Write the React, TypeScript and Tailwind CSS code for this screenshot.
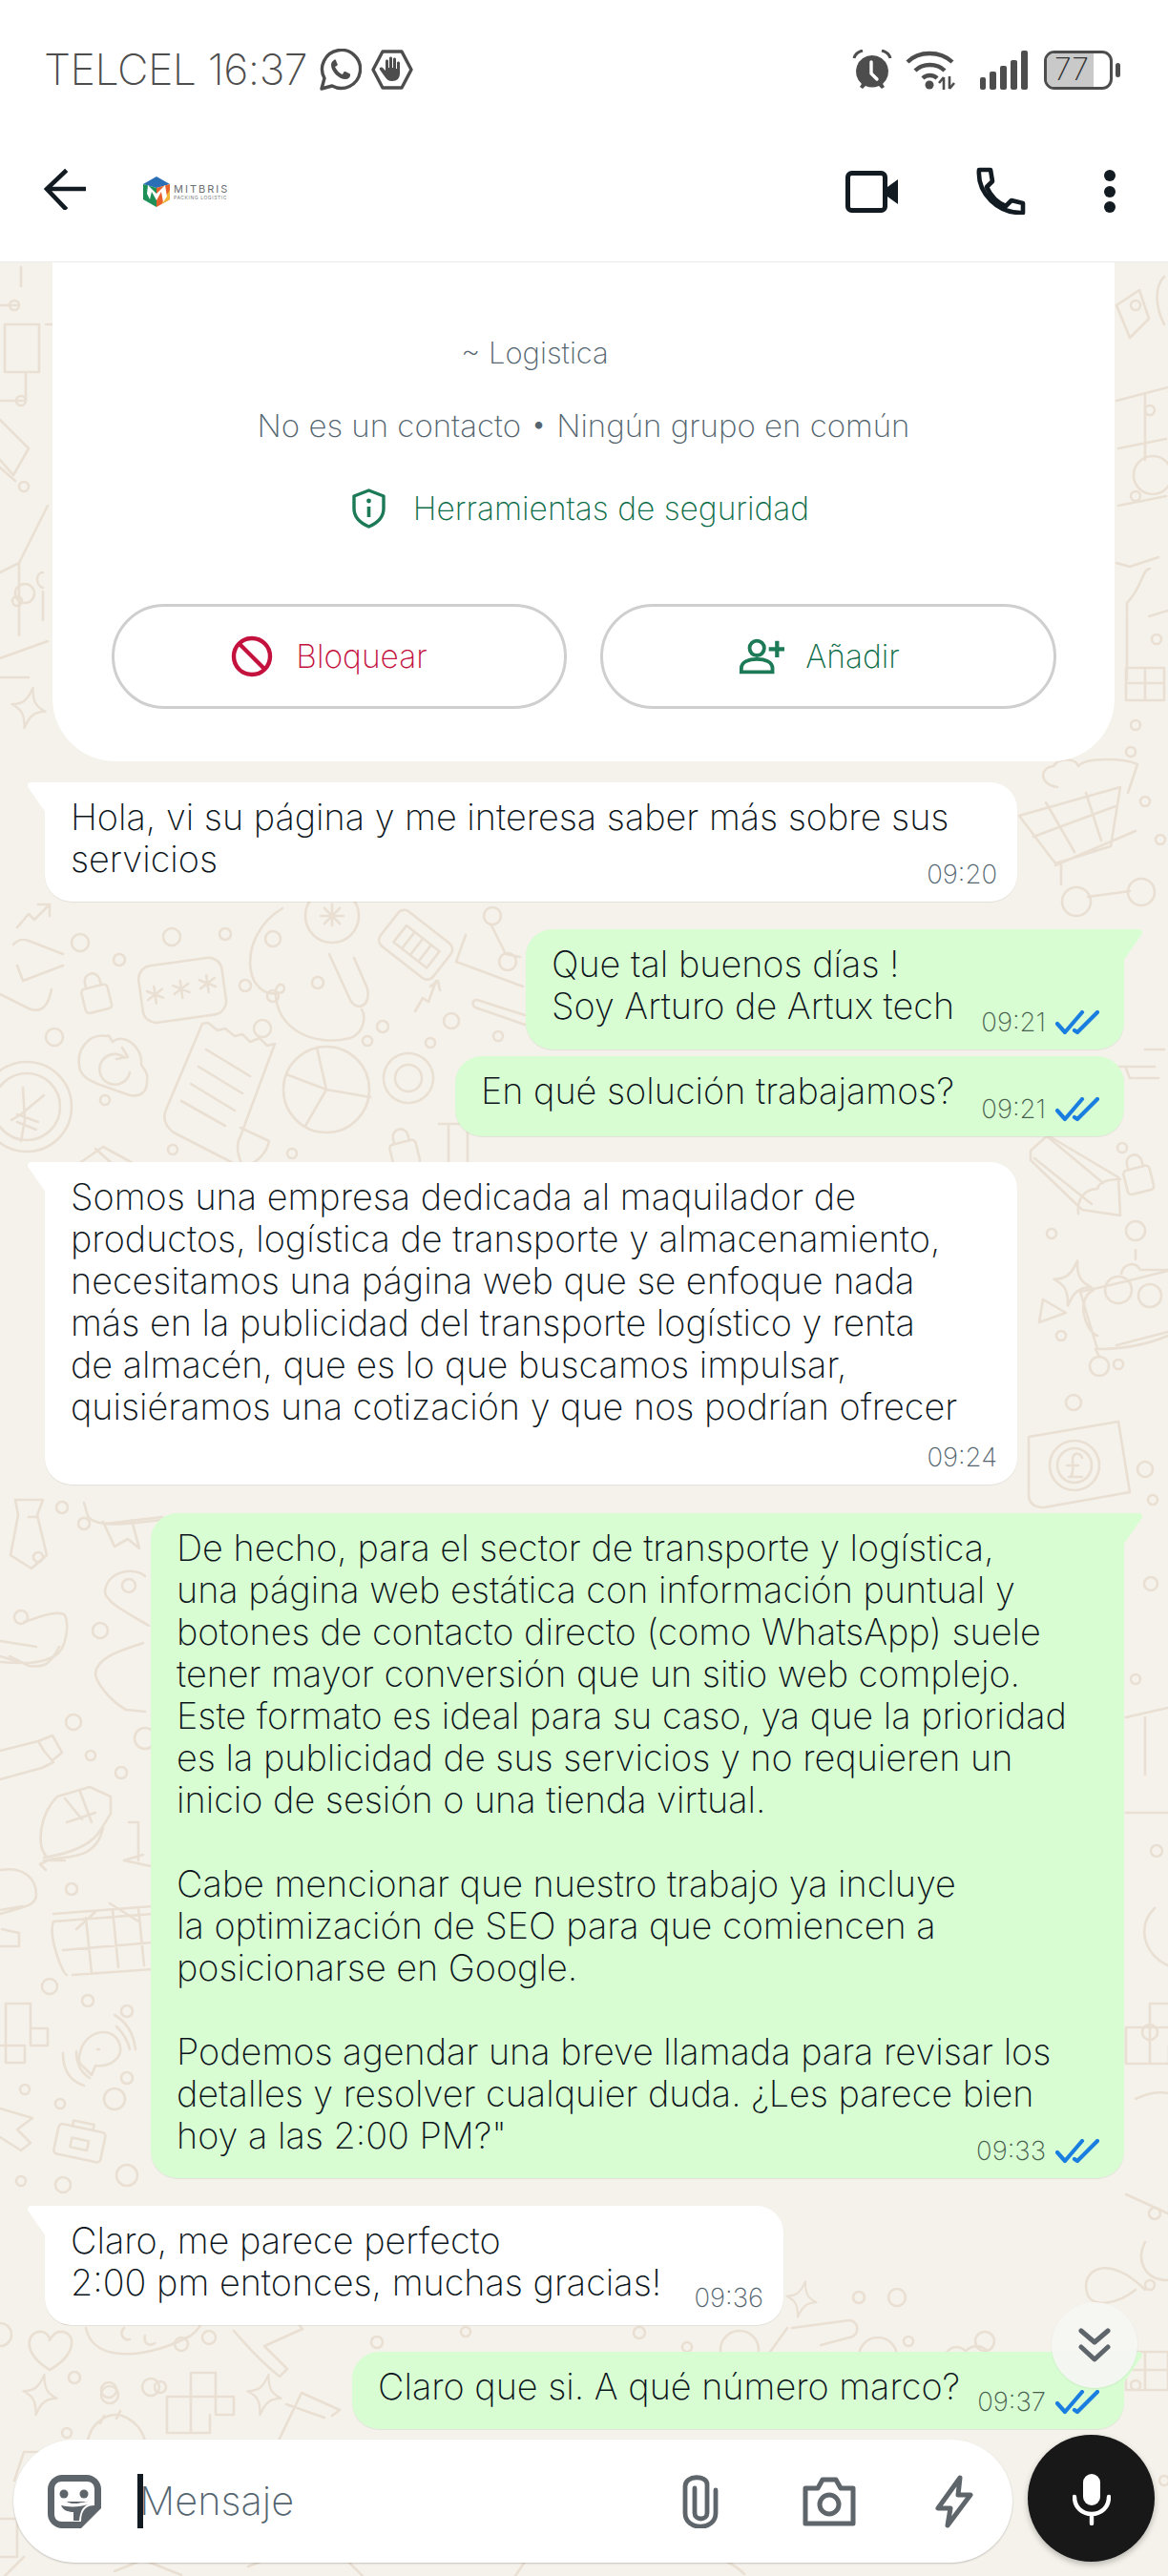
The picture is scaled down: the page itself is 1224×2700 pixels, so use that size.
import React from "react";

const sans = "font-['Inter','Noto_Sans',sans-serif]";

function Dots({ items }: { items: number[][] }) {
  return (
    <>
      {items.map(([x, y, r], i) => (
        <circle key={i} cx={x} cy={y} r={r} />
      ))}
    </>
  );
}

function Lock({ x, y }: { x: number; y: number }) {
  return (
    <g transform={`translate(${x} ${y}) rotate(-14)`}>
      <rect x="-14" y="-8" width="28" height="26" rx="4" />
      <path d="M-8-8v-6a8 8 0 0 1 16 0v6" />
    </g>
  );
}

function Star({ x, y, s = 1 }: { x: number; y: number; s?: number }) {
  return (
    <path transform={`translate(${x} ${y}) scale(${s}) rotate(12)`} d="M0-24C3-8 8-3 20 0 8 3 3 8 0 24-3 8-8 3-20 0-8-3-3-8 0-24Z" />
  );
}

function Heart({ x, y }: { x: number; y: number }) {
  return <path transform={`translate(${x} ${y})`} d="M0 22C-32 2-22-20-8-18-3-17 0-13 0-9 3-15 8-19 14-18 28-15 28 6 0 22Z" />;
}

function Blocks({ x, y }: { x: number; y: number }) {
  return (
    <g transform={`translate(${x} ${y})`}>
      <path d="M5 0h26v25H5zM31 25h19v19H31zM5 25H-20v38H5v-38zM5 63h20v-19" />
    </g>
  );
}

function Cart({ x, y }: { x: number; y: number }) {
  return (
    <g transform={`translate(${x} ${y})`}>
      <path d="M0 60 106 30l-10 62-58 18L0 60ZM15 82l86-32M28 46l30 52M70 36l16 50M38 112l84-36M44 112v20" />
      <circle cx="60" cy="150" r="15" />
      <circle cx="128" cy="140" r="14" />
      <path d="M72 145l44-6" />
      <path d="M40 30c-18-2-20-20-4-22 6-10 24-8 26 0 8-10 50-8 62-2l-10 30" />
    </g>
  );
}

function Wallpaper() {
  return (
    <svg
      className="absolute inset-0 w-full h-full"
      viewBox="0 275 1224 2425"
      fill="none"
      stroke="#e9dfd2"
      strokeWidth="2.6"
      strokeLinecap="round"
      strokeLinejoin="round"
    >
      <Dots
        items={[
          [84, 988, 9], [180, 982, 9], [236, 979, 6], [125, 1006, 6], [57, 1087, 9], [286, 1044, 6], [275, 1078, 9],
          [257, 1033, 6], [286, 984, 8], [333, 1030, 6], [401, 1076, 6], [473, 1070, 8], [385, 1091, 5], [451, 1093, 5], [522, 1086, 5],
          [110, 1153, 5], [181, 1205, 5], [306, 1209, 5], [65, 1580, 6], [88, 1597, 6], [40, 1632, 5], [105, 1709, 8], [95, 1840, 5],
          [77, 1805, 8], [127, 1858, 6], [75, 1980, 6], [52, 2082, 8], [92, 2097, 6], [133, 2108, 6], [133, 2178, 6], [26, 2190, 5],
          [63, 2205, 5], [120, 2200, 11], [22, 2286, 5], [66, 2290, 8], [133, 2280, 11],
          [1185, 788, 5], [1200, 840, 5], [1216, 880, 5], [1176, 1203, 5], [1190, 1290, 10], [1102, 1293, 5], [1112, 1400, 5],
          [1172, 1430, 5], [1125, 1470, 8], [1200, 1540, 8], [1208, 1572, 5],
          [15, 320, 5], [22, 420, 5], [25, 510, 5], [18, 630, 5], [1190, 320, 5], [1205, 430, 5], [1190, 520, 5], [1212, 670, 5], [1190, 760, 5],
          [70, 2430, 6], [190, 2457, 7], [219, 2450, 7], [78, 2492, 6], [114, 2505, 8], [168, 2502, 6], [70, 2550, 5],
          [395, 2455, 6], [488, 2444, 5], [670, 2445, 6], [720, 2460, 5], [900, 2408, 6], [940, 2408, 9], [1032, 2454, 10], [952, 2454, 5],
          [1190, 2500, 5], [1210, 2320, 6], [1205, 2130, 8], [1212, 1940, 6], [1190, 1760, 5], [1206, 1660, 7],
          [1220, 2600, 5], [1205, 2395, 5],
        ]}
      />
      <path d="M18 972l12-14 6 6 16-16M40 948h12v12" />
      <path d="M14 990c5-6 10-6 16-4l36 14M66 1012 24 1028 18 1012M0 1042l30 15c12 5 20 0 24-20" />
      <Lock x={100} y={1042} />
      <g transform="rotate(-8 190 1037)">
        <rect x="147" y="1008" width="88" height="60" rx="14" />
        <path d="M162 1030v18M154 1034l16 9M170 1034l-16 9M190 1028v18M182 1032l16 9M198 1032l-16 9M218 1026v18M210 1030l16 9M226 1030l-16 9" />
      </g>
      <path d="M296 952c-50 30-40 100 0 88 6-6-4-14-7-2-2 40 40 60 78 50 16-6 16-24 12-30" />
      <circle cx="348" cy="960" r="28" />
      <path d="M345 1000l22 48c6 12 22 8 18-12l-14-32M348 948v22M336 960h24M340 952l16 16M356 952l-16 16" />
      <g transform="rotate(38 432 990)">
        <rect x="400" y="965" width="70" height="46" rx="8" />
        <path d="M415 978h44v22h-44zM426 978v22M437 978v22M448 978v22" />
      </g>
      <path d="M435 1060l8-14 6 4 8-22M451 1034l8-6 2 10" />
      <path d="M488 980 478 1008l70 26M515 970 530 1000M545 1003l-15-3M500 1048l50 16M500 1048c-6 0-5 6-2 8l52 18" />
      <circle cx="516" cy="960" r="9" />
      <circle cx="532" cy="1008" r="9" />
      <path d="M112 1086c-18-4-34 14-28 36 4 8 10 10 18 14l34 12c12 2 18-4 18-14 2-10-4-14-6-18 2-20-20-34-30-24-4-6-4-8-6-6Z" />
      <path d="M130 1108a16 16 0 1 0 6 16M128 1098l6 10-12 2" />
      <circle cx="28" cy="1160" r="47" />
      <circle cx="28" cy="1160" r="35" />
      <path d="M24 1140l2 34 -4 22M46 1148l-24 20-10 6M18 1168l22 8M18 1176l20 8" />
      <path d="M212 1073l-38 90c-4 10 0 18 8 24l74 38c-6-10-10-24-4-34l36-97-8 2-8-8-10 4-8-8-8 2-10-8-8 2-10-8ZM216 1100l46 28M208 1118l46 28M200 1136l46 28M190 1154l46 26M252 1182l30 14c-2 10-8 20-26 28" />
      <circle cx="342" cy="1142" r="45" />
      <path d="M332 1098l10 44 46 8M342 1142l-42-16M342 1142l-22 38" />
      <circle cx="428" cy="1130" r="14" />
      <circle cx="428" cy="1130" r="26" strokeDasharray="6 2" />
      <Lock x={423} y={1205} />
      <path d="M82 1220l26-18 22 12 28 16M100 1204l18 16M460 1178h30v42M470 1178v42" />

      <path d="M16 1572h29l-6 16 10 42-16 14-22-14 8-42-3-16ZM30 1590h8" />
      <path d="M88 1575l4 14c6 10 30 10 60 6l18-2M108 1595l12 26 14-8 12 10-8-30M110 1597l60-7" />
      <path d="M152 1652c-10-10-40-6-42 16 0 12 30 26 46 36" />
      <circle cx="135" cy="1662" r="7" />
      <path d="M25 1700c14-4 30-12 42-8 6 6 4 36-10 44-16 8-30 8-56 6M10 1736l20 10c15 2 22 0 32-20M0 1720l38 6M0 1736l20 6" />
      <circle cx="22" cy="1695" r="7" />
      <path d="M0 1835l40-10 6 10 10 12-12 6-44 12M40 1825l15-6 10 18-10 8" />
      <path d="M150 1722c-22 8-48 14-50 32 0 8 14 28 32 38l20 2" />
      <circle cx="152" cy="1822" r="11" />
      <path d="M60 1883c-18 18-22 50-12 62M60 1883l34-10 22 10 0 18-10 16c-10 18-34 26-60 30M46 1950l22 0M68 1885l18 22M84 1878l12 32M70 1910l30-10M48 1950c20-6 52 2 60-34M48 1960l-6-6 8-4" />
      <path d="M130 1950l20-6M145 1950v-40h-10M130 1950l28 6" />
      <path d="M0 1960c24-4 38 8 38 26 0 10-8 12-38 20M0 2002l24-4M0 2040h20v-14l-18-4" />
      <path d="M56 2006l104-8M66 2044l94-8M70 2070c-4 0-20-40-14-56l104-8M76 2070l84-6M90 2010l6 58M118 2002l6 60M145 2000l6 60M80 2022l20-18M115 1995l32 20" />
      <path d="M6 2100h26v26h18v18H32v-18M6 2100v62h20v-18H6M0 2144h6" />
      <path d="M86 2145c10-20 36-20 40 0 2 10-8 22-26 20l-4 10-10-10c-6-4-2-14 0-20ZM66 2152c0 20 10 30 22 34M80 2150c0 12 4 22 14 28M120 2112c14 8 20 20 22 36M122 2124c6 6 12 14 14 24M102 2148h2" />
      <path d="M0 2210l34 10-16 12 14 14-10 8-22-14" />
      <g transform="rotate(12 82 2248)">
        <rect x="58" y="2230" width="50" height="32" rx="4" />
        <path d="M72 2230v-6h22v6M74 2242h18v10H74z" />
      </g>

      <Cart x={1068} y={795} />
      <path d="M1080 1206l18-16 74 44 2 40-40-6-54-52ZM1096 1190l60 50M1084 1214l60 48M1130 1272c-2-16 8-26 20-26 2-8 14-10 24-10" />
      <path d="M1170 1118h40M1180 1120l4 10h30M1200 1100h20" />
      <Lock x={1192} y={1232} />
      <Star x={1124} y={1345} s={1} />
      <path d="M1093 1362l24 14-28 10 4-24Z" />
      <path d="M1132 1354c30-6 60-14 92-22M1132 1354l18 60M1224 1400c-24 10-50 14-74 14M1146 1352c-20 10-8 44 4 48M1175 1335c2-10 14-14 20-4l30 0" />
      <circle cx="1172" cy="1352" r="14" />
      <circle cx="1205" cy="1358" r="12" />
      <circle cx="1152" cy="1432" r="10" />
      <path d="M1152 1422l-4-8M1190 1320v-10M1170 1410l54-14" />
      <path d="M1078 1506l94-16 12 74-90 16c-10 0-16-4-16-14v-60Z" />
      <circle cx="1126" cy="1536" r="26" />
      <circle cx="1126" cy="1536" r="18" />
      <path d="M1120 1548h14M1118 1536h12M1122 1548c4-6 2-14 2-18 0-8 8-8 10-2" />

      <path d="M0 320h20M22 280v20M5 340h36v50H5zM5 390h22v30H5M0 420h20M48 340h10" />
      <path d="M0 440l30 30-16 28 -14-16M0 490l16 14" />
      <path d="M50 530l-30 60-20 10M50 530l-30 60 0 76M45 600c-8 0-8 14 0 16M45 620v30" />
      <path d="M0 690l50-18M0 710h30" />
      <circle cx="26" cy="622" r="10" />
      <Star x={30} y={742} s={0.9} />
      <path d="M1170 320l24-16 10 30-20 20-14-34ZM1220 290c-10 10-10 30 0 50" />
      <path d="M1170 420l54-14M1200 412v70M1172 470l50-10M1172 530l50-10" />
      <circle cx="1208" cy="498" r="20" />
      <path d="M1170 590l14 4 30-10M1205 596c-8 0-8 20-24 36v80M1224 640l-20 6" />
      <path d="M1180 700h40v34h-40zM1200 700v34M1180 716h40" />

      <Heart x={52} y={2462} />
      <path d="M90 2440c8 40 70 30 110 8 14-10 18-28 10-38M130 2440c-6 6 0 14 6 12M152 2448c-2 8 4 12 10 8M245 2443c12 14 30 34 48 48l8-8-24-24 40-18-10-12" />
      <circle cx="0" cy="2447" r="12" />
      <Star x={42} y={2510} s={0.9} />
      <Blocks x={195} y={2487} />
      <Star x={277} y={2510} s={0.9} />
      <circle cx="115" cy="2510" r="9" />
      <circle cx="158" cy="2502" r="9" />
      <path d="M92 2558c4-20 22-30 36-26 10 4 20 12 24 26M105 2540l4-8M122 2535l4-8" />
      <path d="M292 2558l24-50 40 18-8 6M300 2520l40 14" />
      <path d="M825 2440l-20 28M830 2440l60-8c10 0 12 16 0 18l-30 8M1200 2400c-40-40-70-20-60 6 6 12 30 10 50-6" />
      <circle cx="775" cy="2463" r="20" />
      <path d="M726 2472l20-6M900 2470a20 20 0 1 1 40 0M992 2480c-6-16 8-26 20-16 10-10 28-4 24 12l-18 18-26-14Z" />
      <Star x={840} y={2410} s={0.8} />
      <path d="M1180 2465h44v40h-44zM1180 2484h44M1200 2465v40" />

      <path d="M1210 2000c-20 20-10 50 14 60M1190 2200c20-10 34-6 34-6M1180 1800l44-10M1200 1800v60M1180 1900h44M1180 2300l44 20M1200 2350c-10 20 0 40 24 40" />

      <path d="M45 2570h-20l-10 30M0 2640h18v40H0M25 2680l-20 20M120 2695l30-12 40 16M260 2690l80-30 40 40M560 2670l-20 30M680 2668c40 0 80 10 100 30" />
      <Blocks x={1200} y={2100} />
    </svg>
  );
}

function Ticks() {
  return (
    <svg width="46" height="26" viewBox="0 0 46 26" fill="none" stroke="#1a7ee0" strokeWidth="4.2" strokeLinecap="round" strokeLinejoin="round">
      <path d="M2 14l8 9L28 2" />
      <path d="M20 21l3 2L44 2" />
    </svg>
  );
}

function Tail({ side }: { side: "in" | "out" }) {
  if (side === "in") {
    return (
      <svg className="absolute left-[-18px] top-0" width="30" height="32" viewBox="0 0 30 32">
        <path d="M30 0H4C0 0-1 4 1 6L19 32H30Z" fill="#fff" />
      </svg>
    );
  }
  return (
    <svg className="absolute right-[-19px] top-0" width="30" height="32" viewBox="0 0 30 32">
      <path d="M0 0H26C30 0 31 4 29 6L11 32H0Z" fill="#d9fdd3" />
    </svg>
  );
}

type BubbleProps = {
  side: "in" | "out";
  lines: string[];
  time: string;
  box: string;
  tail?: boolean;
};

function Bubble({ side, lines, time, box, tail = true }: BubbleProps) {
  const isOut = side === "out";
  return (
    <div
      className={`relative rounded-[28px] pt-[14px] shadow-[0_1px_1px_rgba(0,0,0,0.07)] ${
        isOut ? "self-end mr-[46px] bg-[#d9fdd3] pl-[27px]" : "self-start ml-[47px] bg-white pl-[27px]"
      } ${tail ? (isOut ? "rounded-tr-none" : "rounded-tl-none") : ""} ${box}`}
    >
      {tail && <Tail side={side} />}
      {lines.map((l, i) => (
        <div key={i} className="h-[44px] leading-[44px] whitespace-nowrap text-[37.8px] font-[250] text-[#0b141a]">
          {l}
        </div>
      ))}
      <div className={`absolute bottom-[12px] flex h-[32px] items-center gap-[10px] ${isOut ? "right-[26px]" : "right-[21px]"}`}>
        <span className={`text-[27.5px] font-extralight ${isOut ? "text-[#47614f]" : "text-[#54656f]"}`}>{time}</span>
        {isOut && <Ticks />}
      </div>
    </div>
  );
}

function StatusBar() {
  return (
    <div className="flex h-[146px] items-center justify-between pl-[46px] pr-[50px]">
      <div className="flex items-center text-[#4d4d4d]">
        <span className="text-[44.8px] font-extralight leading-none whitespace-nowrap tracking-[-0.5px]">TELCEL 16:37</span>
        <svg className="ml-[13px]" width="44" height="44" viewBox="0 0 44 44" fill="none" stroke="#4d4d4d" strokeWidth="3.4" strokeLinejoin="round">
          <path d="M2 42l3-11A20 20 0 1 1 13 39L2 42Z" />
          <path fill="#4d4d4d" stroke="none" d="M15 12c-2 1-3 3-3 5 0 7 8 15 15 15 3 0 5-2 5-4 0-1 0-2-1-2l-4-2c-1 0-2 0-2 1l-1 2c-3-1-6-4-8-8l2-1c1-1 1-2 0-3l-1-3c-1-1-1-1-2 0Z" />
        </svg>
        <svg className="ml-[10px]" width="44" height="44" viewBox="0 0 44 44" fill="none" stroke="#4d4d4d" strokeWidth="3.4" strokeLinejoin="round">
          <path d="M12 3h20l10 19-10 19H12L2 22 12 3Z" />
          <path fill="#4d4d4d" stroke="none" d="M15 13c0-2 3-2 3 0v7h1v-10c0-2 3-2 3 0v10h1v-9c0-2 3-2 3 0v10h1v-6c0-2 3-2 3 0v11c0 5-3 8-8 8-4 0-6-2-8-5l-5-7c-1-2 1-3 3-2l3 3V13Z" />
        </svg>
      </div>
      <div className="flex items-center text-[#4d4d4d]">
        <svg width="42" height="42" viewBox="0 0 42 42">
          <path fill="#4d4d4d" d="M21 6a17 17 0 0 1 11 30l2 3-3 2-3-3a17 17 0 0 1-14 0l-3 3-3-2 2-3A17 17 0 0 1 21 6Z" />
          <path d="M2 9c1-4 5-7 9-8M40 9c-1-4-5-7-9-8" fill="none" stroke="#4d4d4d" strokeWidth="3" />
          <path d="M20 13v12l6 6" fill="none" stroke="#fff" strokeWidth="3.4" strokeLinecap="round" strokeLinejoin="round" />
        </svg>
        <svg className="ml-[14px]" width="52" height="42" viewBox="0 0 52 42" fill="none" stroke="#4d4d4d" strokeWidth="4.4">
          <path d="M2 13C14 1 36 1 49 13M10 22c8-8 23-8 31 0M18 30c4-4 11-4 15 0" />
          <circle cx="25" cy="37" r="4.5" fill="#4d4d4d" stroke="none" />
          <path d="M40 29v13M46 28v13" strokeWidth="2.6" />
          <path d="M35 35l5-6M51 35l-5 6" strokeWidth="2.6" />
        </svg>
        <div className="ml-[26px] flex h-[41px] items-end gap-[4px]">
          <span className="h-[13px] w-[6px] rounded-[2px] bg-[#4d4d4d]" />
          <span className="h-[19px] w-[7px] rounded-[2px] bg-[#4d4d4d]" />
          <span className="h-[25px] w-[7px] rounded-[2px] bg-[#4d4d4d]" />
          <span className="h-[31px] w-[7px] rounded-[2px] bg-[#4d4d4d]" />
          <span className="h-[41px] w-[7px] rounded-[2px] bg-[#4d4d4d]" />
        </div>
        <div className="ml-[17px] flex items-center gap-[3px]">
          <div className="relative h-[41px] w-[72px] overflow-hidden rounded-[11px] border-[3.5px] border-[#4d4d4d]">
            <div className="flex h-full w-[49px] items-center justify-center bg-[#c9c9c9] pl-[3px] text-[32px] font-extralight leading-none text-[#333]">
              77
            </div>
          </div>
          <span className="h-[15px] w-[5px] rounded-full bg-[#4d4d4d]" />
        </div>
      </div>
    </div>
  );
}

function AppBar() {
  return (
    <div className="flex h-[129px] items-start border-b border-[#ececec] pl-[46px] pr-[55px] pt-[30px]">
      <svg width="44" height="44" viewBox="0 0 44 44" fill="none" stroke="#111b21" strokeWidth="4.6" strokeLinecap="square">
        <path d="M42 22H4M22 4 3 22l19 20" />
      </svg>
      <div className="ml-[60px] mt-[9px] flex items-center">
        <svg width="29" height="32" viewBox="0 0 29 32">
          <path fill="#2a6fb5" d="M14 0 28 8 14 12 0 8Z" />
          <path fill="#1d8f57" d="M0 8 14 12V32L0 24Z" />
          <path fill="#e8602c" d="M28 8V24L14 32V12Z" />
          <path fill="#f2b632" d="M28 14V24L19 29Z" />
          <path fill="#fff" d="M5 9l9 9 9-9 2 12-4 6-2-11-5 9-5-9-2 8-3-6 1-9Z" />
        </svg>
        <div className="ml-[3px] flex flex-col leading-none">
          <span className="text-[11px] leading-[11px] tracking-[2px] text-[#6b6f72]">MITBRIS</span>
          <span className="text-[5px] leading-[6px] tracking-[0.6px] text-[#7a7e81]">PACKING LOGISTIC</span>
        </div>
      </div>
      <div className="ml-auto flex items-center">
        <svg width="56" height="44" viewBox="0 0 56 44">
          <rect x="2.5" y="2.5" width="39" height="39" rx="4" fill="none" stroke="#111b21" strokeWidth="5" />
          <path d="M44 17 55 9V35L44 27Z" fill="#111b21" />
        </svg>
        <svg className="ml-[81px] -mt-[1px]" width="52" height="50" viewBox="0 0 52 50" fill="none" stroke="#111b21" strokeWidth="4.6" strokeLinejoin="round">
          <path d="M3 3h12l2 12-6 6c4 9 10 16 20 20l6-6 12 3v10c-26 1-48-20-46-45Z" />
        </svg>
        <div className="ml-[82px] flex flex-col gap-[4.5px]">
          <span className="h-[12px] w-[12px] rounded-full bg-[#111b21]" />
          <span className="h-[12px] w-[12px] rounded-full bg-[#111b21]" />
          <span className="h-[12px] w-[12px] rounded-full bg-[#111b21]" />
        </div>
      </div>
    </div>
  );
}

function ContactCard() {
  return (
    <div className="ml-[55px] flex h-[523px] w-[1113px] flex-col items-center rounded-b-[66px] bg-white font-[250]">
      <div className="mt-[75px] h-[40px] pr-[102px] text-[31px] leading-[40px] text-[#54656f]">~ Logistica</div>
      <div className="mt-[36px] h-[40px] text-[33px] leading-[40px] text-[#54656f]">No es un contacto • Ningún grupo en común</div>
      <div className="mt-[45px] flex h-[44px] items-center gap-[28px] pr-[7px] text-[33.5px] text-[#0f6e4a]">
        <svg width="37" height="42" viewBox="0 0 37 42" fill="none" stroke="#1c7a56" strokeWidth="3.4" strokeLinejoin="round">
          <path d="M18.5 2 34 8v13c0 9-6 15-15.500 19C9 36 3 30 3 21V8L18.500 2Z" />
          <path d="M18.500 19v11" strokeWidth="3.6" />
          <circle cx="18.500" cy="13" r="2.400" fill="#1c7a56" stroke="none" />
        </svg>
        Herramientas de seguridad
      </div>
      <div className="mt-[78px] flex gap-[35px]">
        <div className="flex h-[110px] w-[477px] items-center justify-center gap-[24px] rounded-full border-[3px] border-[#cfcfcf] pr-[20px] text-[33.5px] text-[#c4123f]">
          <svg width="44" height="44" viewBox="0 0 44 44" fill="none" stroke="#c4123f" strokeWidth="4.4">
            <circle cx="22" cy="22" r="19" />
            <path d="M9 9l26 26" />
          </svg>
          Bloquear
        </div>
        <div className="flex h-[110px] w-[478px] items-center justify-center gap-[22px] rounded-full border-[3px] border-[#cfcfcf] pr-[18px] text-[33.5px] text-[#0f6e4a]">
          <svg width="48" height="38" viewBox="0 0 50 38" fill="none" stroke="#1c7a56" strokeWidth="4">
            <circle cx="20" cy="10" r="8" />
            <path d="M3 36v-4c0-7 8-10 17-10s17 3 17 10v4H3Z" />
            <path d="M42 2v18M33 11h17" strokeWidth="4.4" />
          </svg>
          Añadir
        </div>
      </div>
    </div>
  );
}

function Composer() {
  return (
    <div className="ml-[14px] mt-[11px] flex items-start">
      <div className="flex h-[129px] w-[1047px] items-center rounded-[65px] bg-white pl-[36px] shadow-[0_1px_2px_rgba(0,0,0,0.2)]">
        <svg width="56" height="56" viewBox="0 0 56 56">
          <path fill="#5f666b" d="M15 0h26c8 0 15 7 15 15v20L35 56H15C7 56 0 49 0 41V15C0 7 7 0 15 0Z" />
          <path fill="#fff" d="M15 7h26c5 0 8 3 8 8v13H7V15c0-5 3-8 8-8ZM7 28h11c4 0 3 2 10 2s8-2 18-2h3v4c-8 0-14 4-14 17H15c-5 0-8-3-8-8V28Z" />
          <circle cx="17" cy="20" r="4.500" fill="#5f666b" />
          <circle cx="38" cy="20" r="4.500" fill="#5f666b" />
          <path fill="#5f666b" d="M14 32c7 2 20 2 28-1-6 3-8 8-9 17h-6v-9c-6 0-11-2-13-7Z" />
        </svg>
        <span className="ml-[38px] h-[57px] w-[6px] bg-[#111b21]" />
        <span className="-ml-[4px] text-[41.5px] font-[250] leading-none text-[#54656f]">Mensaje</span>
        <svg className="ml-auto" width="38" height="56" viewBox="0 0 38 56" fill="none" stroke="#5f666b" strokeWidth="4.800" strokeLinecap="round">
          <path d="M13 14v26c0 8 13 8 13 0V10C26 0 3 0 3 12v28c0 19 32 19 32 0V16" />
        </svg>
        <svg className="ml-[88px]" width="56" height="52" viewBox="0 0 56 52" fill="none" stroke="#5f666b" strokeWidth="5" strokeLinejoin="round">
          <path d="M3 12h13l5-9h14l5 9h13v37H3V12Z" />
          <circle cx="28" cy="29" r="10" />
        </svg>
        <svg className="ml-[83px] mr-[41px]" width="40" height="56" viewBox="0 0 40 56" fill="none" stroke="#5f666b" strokeWidth="5" strokeLinejoin="round">
          <path d="M26 3 3 35h13L13 53l24-32H24l2-18Z" />
        </svg>
      </div>
      <div className="-mt-[5px] ml-[16px] flex h-[133px] w-[133px] items-center justify-center rounded-full bg-[#181818] shadow-[0_3px_6px_rgba(0,0,0,0.25)]">
        <svg width="40" height="56" viewBox="0 0 40 56" fill="none" stroke="#fff" strokeWidth="4.400" strokeLinecap="round">
          <rect x="11" y="2" width="18" height="33" rx="9" fill="#fff" stroke="none" />
          <path d="M2 26c0 11 8 18 18 18s18-7 18-18M20 44v10" />
        </svg>
      </div>
    </div>
  );
}

export default function App() {
  return (
    <div className={`flex h-[2700px] w-[1224px] flex-col overflow-hidden bg-white ${sans}`}>
      <StatusBar />
      <AppBar />
      <div className="relative flex flex-1 flex-col bg-[#f5f2eb]">
        <Wallpaper />
        <div className="relative flex flex-1 flex-col">
          <ContactCard />
          <div className="mt-[22px] flex flex-col">
            <Bubble
              side="in"
              box="w-[1019px] pb-[23px]"
              time="09:20"
              lines={["Hola, vi su página y me interesa saber más sobre sus", "servicios"]}
            />
            <Bubble
              side="out"
              box="mt-[29px] w-[627px] pb-[24px]"
              time="09:21"
              lines={["Que tal buenos días !", "Soy Arturo de Artux tech"]}
            />
            <Bubble
              side="out"
              tail={false}
              box="mt-[7px] w-[701px] pb-[26px]"
              time="09:21"
              lines={["En qué solución trabajamos?"]}
            />
            <Bubble
              side="in"
              box="mt-[27px] w-[1019px] pb-[60px]"
              time="09:24"
              lines={[
                "Somos una empresa dedicada al maquilador de",
                "productos, logística de transporte y almacenamiento,",
                "necesitamos una página web que se enfoque nada",
                "más en la publicidad del transporte logístico y renta",
                "de almacén, que es lo que buscamos impulsar,",
                "quisiéramos una cotización y que nos podrían ofrecer",
              ]}
            />
            <Bubble
              side="out"
              box="mt-[30px] w-[1020px] pb-[23px]"
              time="09:33"
              lines={[
                "De hecho, para el sector de transporte y logística,",
                "una página web estática con información puntual y",
                "botones de contacto directo (como WhatsApp) suele",
                "tener mayor conversión que un sitio web complejo.",
                "Este formato es ideal para su caso, ya que la prioridad",
                "es la publicidad de sus servicios y no requieren un",
                "inicio de sesión o una tienda virtual.",
                "\u00a0",
                "Cabe mencionar que nuestro trabajo ya incluye",
                "la optimización de SEO para que comiencen a",
                "posicionarse en Google.",
                "\u00a0",
                "Podemos agendar una breve llamada para revisar los",
                "detalles y resolver cualquier duda. ¿Les parece bien",
                'hoy a las 2:00 PM?"',
              ]}
            />
            <Bubble
              side="in"
              box="mt-[29px] w-[774px] pb-[23px]"
              time="09:36"
              lines={["Claro, me parece perfecto", "2:00 pm entonces, muchas gracias!"]}
            />
            <Bubble
              side="out"
              box="mt-[28px] w-[809px] pb-[23px]"
              time="09:37"
              lines={["Claro que si. A qué número marco?"]}
            />
          </div>
          <Composer />
          <div className="absolute left-[1102px] top-[2138px] flex h-[90px] w-[90px] items-center justify-center rounded-full bg-[#f5f5f2]/95 shadow-[0_1px_2px_rgba(0,0,0,0.08)]">
            <svg width="34" height="38" viewBox="0 0 34 38" fill="none" stroke="#5f666b" strokeWidth="5" strokeLinecap="round" strokeLinejoin="round">
              <path d="M3 4l14 12L31 4M3 21l14 13 14-13" />
            </svg>
          </div>
        </div>
      </div>
    </div>
  );
}
